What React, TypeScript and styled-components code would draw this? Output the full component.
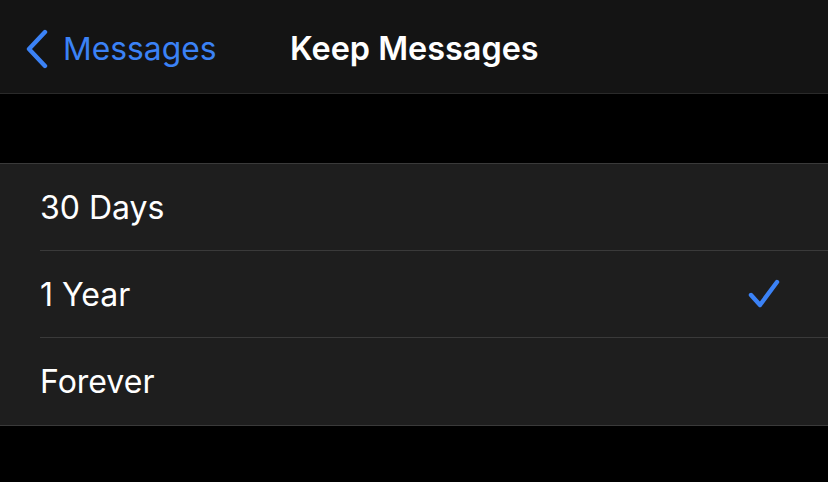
import React from 'react';
import styled, { createGlobalStyle } from 'styled-components';

const GlobalStyle = createGlobalStyle`
  html, body {
    margin: 0;
    padding: 0;
    background: #000000;
    font-family: Inter, "Noto Sans", sans-serif;
    -webkit-font-smoothing: antialiased;
  }
`;

const Screen = styled.div`
  width: 828px;
  height: 482px;
  background: #000000;
  display: flex;
  flex-direction: column;
  overflow: hidden;
`;

const NavBar = styled.div`
  height: 94px;
  box-sizing: border-box;
  padding-top: 4px;
  background: #141414;
  border-bottom: 1px solid #2a2a2a;
  display: flex;
  align-items: center;
  position: relative;
`;

const BackButton = styled.div`
  display: flex;
  align-items: center;
  gap: 14px;
  padding-left: 25px;
  color: #3b82f6;
  font-size: 31.8px;
`;

const Title = styled.div`
  position: absolute;
  left: 290px;
  top: 4px;
  bottom: 0;
  display: flex;
  align-items: center;
  color: #ffffff;
  font-size: 32.4px;
  font-weight: 600;
`;

const Spacer = styled.div`
  height: 69px;
`;

const Group = styled.div`
  background: #1e1e1e;
  border-top: 1px solid #3a3a3a;
  border-bottom: 1px solid #3a3a3a;
  padding-left: 40px;
`;

const Row = styled.div<{ $last?: boolean }>`
  height: ${p => (p.$last ? 87 : 86)}px;
  display: flex;
  align-items: center;
  justify-content: space-between;
  padding-right: 47px;
  border-bottom: ${p => (p.$last ? 'none' : '1px solid #3a3a3a')};
  color: #ffffff;
  font-size: 32px;
`;

const Chevron = () => (
  <svg width="24" height="40" viewBox="0 0 24 40">
    <path d="M20 3 L4 20 L20 37" fill="none" stroke="#3b82f6" strokeWidth="4.4" strokeLinecap="round" strokeLinejoin="round" />
  </svg>
);

const Check = () => (
  <svg width="34" height="32" viewBox="0 0 34 32">
    <path d="M4 17 L13 27 L30 4" fill="none" stroke="#3b82f6" strokeWidth="4.4" strokeLinecap="round" strokeLinejoin="round" />
  </svg>
);

const options = [
  { label: '30 Days', selected: false },
  { label: '1 Year', selected: true },
  { label: 'Forever', selected: false },
];

export default function App() {
  return (
    <Screen>
      <GlobalStyle />
      <NavBar>
        <BackButton>
          <Chevron />
          <span>Messages</span>
        </BackButton>
        <Title>Keep Messages</Title>
      </NavBar>
      <Spacer />
      <Group>
        {options.map((o, i) => (
          <Row key={o.label} $last={i === options.length - 1}>
            <span>{o.label}</span>
            {o.selected && <Check />}
          </Row>
        ))}
      </Group>
    </Screen>
  );
}
